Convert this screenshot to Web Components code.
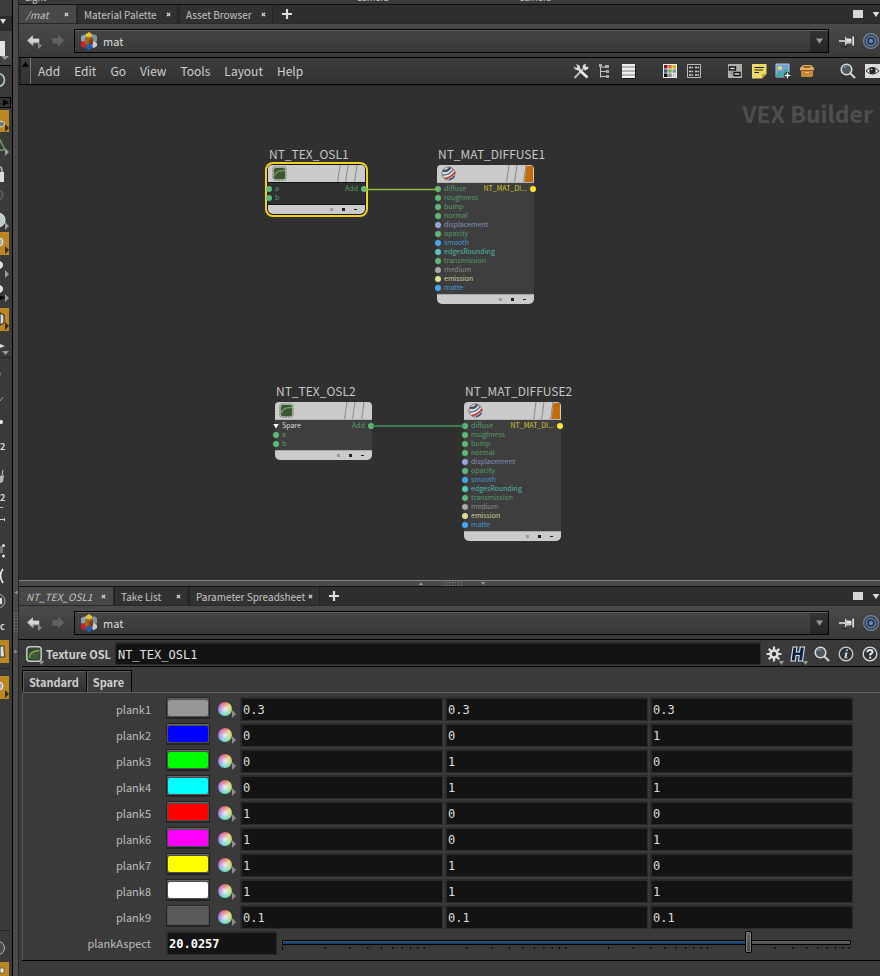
<!DOCTYPE html>
<html lang="en">
<head>
<meta charset="utf-8">
<title>Network editor</title>
<style>
html, body { height: 100%; }
body { margin: 0; background: #3a3a3a; color: #cccccc; overflow: hidden;
  font: 12px/16px "Noto Sans CJK SC", "Noto Sans", sans-serif; }
</style>
</head>
<body>
<app-window></app-window>
<script>
const ICONS = {
  back: ['0 0 20 20', '<path d="M1 9.500 9 2V6.500H17V13H9V17Z" fill="#d4d4d4" stroke="#222" stroke-width=".6"/><path d="M3 10 9 15.500V12H16" fill="none" stroke="#999"/><path d="M15 12 20 16 15 20Z" fill="#8a8a8a"/>'],
  forward: ['0 0 20 20', '<path d="M18 9.500 10 2V6.500H3V13H10V17Z" fill="#626262"/><path d="M16 13 19 16 16 19Z" fill="#444"/>'],
  mat: ['0 0 18 18', '<path d="M1 4 6 2 8 4V9L4 11 1 9Z" fill="#8fa3b0"/><path d="M10 4 14 2 17 4V9L13 11 10 9Z" fill="#7d93a5"/><path d="M1 10 4 9 7 11V15L4 16 1 14Z" fill="#cc2222"/><path d="M11 11 14 9 17 11V14L14 16 11 15Z" fill="#c9c9c9"/><path d="M5 6 9 4 13 6V12L9 14 5 12Z" fill="#a8641a"/><path d="M9 8V14L13 12V6Z" fill="#7c430f"/><path d="M6 2 9 0 12 2 12 4 9 5.500 6 4Z" fill="#e6c52c"/><path d="M5.500 13 9 11.500 12.500 13V16L9 18 5.500 16Z" fill="#285ba8"/>'],
  pin: ['0 0 16 16', '<path d="M0 7.200H6V8.800H0Z" fill="#ddd"/><path d="M6 3 8 5.500H12V10.500H8L6 13Z" fill="#c9c9c9"/><path d="M8 7H12" stroke="#fff"/><path d="M12.500 6V10" stroke="#888"/><path d="M14.200 3.500V12.500" stroke="#e6e6e6" stroke-width="1.600"/><path d="M2 13.500H8" stroke="#252525"/>'],
  target: ['0 0 16 16', '<circle cx="8" cy="8" r="7.400" fill="#333c49" stroke="#7289aa" stroke-width="1.200"/><circle cx="8" cy="8" r="4.700" fill="none" stroke="#6888b8" stroke-width="1.200"/><circle cx="8" cy="8" r="2" fill="#5f8fd6"/>'],
  max: ['0 0 10 8', '<path d="M0 0H10V8H0Z" fill="#d5d7d5"/>'],
  tri: ['0 0 8 6', '<path d="M0 0H8L4 6Z" fill="currentColor"/>'],
  triUp: ['0 0 8 6', '<path d="M0 6H8L4 0Z" fill="currentColor"/>'],
  plus: ['0 0 10 10', '<path d="M5 0V10M0 5H10" stroke="#ddd" stroke-width="2.200"/>'],
  close: ['0 0 6 6', '<path d="M1 1 5 5M5 1 1 5" stroke="#ddd" stroke-width="1.500"/>'],
  tools: ['0 0 16 16', '<path d="M1.500 15 10 6" stroke="#b9b9b9" stroke-width="2"/><path d="M9.500 5 10 2 13 .5 12.500 3 13.500 4 15.500 3.500 15 6 12 7.500Z" fill="#ddd"/><path d="M.5 3 3 5 4.500 4 3 1 6.500 2.500 7.500 6 9 8 7 9.500 5.500 7.500 2 6.500Z" fill="#dcdcdc"/><path d="M8 8.500 14.500 14.500" stroke="#eee" stroke-width="2.600"/>'],
  tree: ['0 0 16 16', '<path d="M3.500 2V14.500M3.500 4H8M3.500 8.500H9M3.500 13.500H9" stroke="#c8c8c8" fill="none"/><path d="M2 1H5V4H2ZM8 2H12V5H8ZM9 7H12V10H9ZM9 12H12V15H9Z" fill="#aaa"/>'],
  list: ['0 0 16 16', '<path d="M2 2H15V16H2Z" fill="#181818"/><path d="M1 1H14V15H1Z" fill="#b5b5b5"/><path d="M1 2H14M1 6H14M1 10H14M1 14H14" stroke="#efefef" stroke-width="2"/>'],
  palette: ['0 0 16 16', '<path d="M1 1H15V15H1Z" fill="#eee"/><path d="M2 2H5.500V5.500H2Z" fill="#912"/><path d="M6.300 2H9.700V5.500H6.300Z" fill="#d86b28"/><path d="M10.500 2H14V5.500H10.500Z" fill="#d9b41f"/><path d="M2 6.300H5.500V9.700H2Z" fill="#345888"/><path d="M6.300 6.300H9.700V9.700H6.300Z" fill="#6bb72c"/><path d="M10.500 6.300H14V9.700H10.500Z" fill="#8295a9"/><path d="M2 10.500H5.500V14H2Z" fill="#111"/><path d="M6.300 10.500H9.700V14H6.300Z" fill="#888"/><path d="M10.500 10.500H14V14H10.500Z" fill="#ccc"/>'],
  table: ['0 0 16 16', '<path d="M1.500 1.500H14.500V14.500H1.500Z" fill="#333" stroke="#bbb"/><path d="M3 4.500H7M9 4.500H13M3 8.500H7M9 8.500H13M3 12H7M9 12H13" stroke="#d7d7d7" stroke-width="1.600" stroke-dasharray="2.500 .5"/>'],
  netbox: ['0 0 16 16', '<path d="M1 1H15V15H1Z" fill="#adb0ad"/><path d="M2.500 4H8.500V7H2.500ZM7 9.500H13V12.500H7Z" fill="#ddd" stroke="#111" stroke-width="1.400"/><path d="M4.500 7V11H7" stroke="#777" fill="none"/>'],
  note: ['0 0 16 16', '<path d="M1 1H15.500V11L11 15.500H1Z" fill="#ecd968"/><path d="M11 15.500V11H15.500Z" fill="#bda83d"/><path d="M3.500 4.500H13M3.500 7H12M3.500 9.500H8" stroke="#222" stroke-width="1.200"/>'],
  image: ['0 0 16 16', '<path d="M1 1H14V14H1Z" fill="#6f9fd5" stroke="#a9c9e9"/><circle cx="5" cy="5" r="2" fill="#ece454"/><path d="M1 12 5 8 7 10 11 5 14 9V14H1Z" fill="#47a9a5"/><path d="M12.500 9V16M9 12.500H16" stroke="#111" stroke-width="3.600"/><path d="M12.500 9.500V15.500M9.500 12.500H15.500" stroke="#fff" stroke-width="1.500"/>'],
  box: ['0 0 16 16', '<path d="M1 5 4 2H12L15 5V8H1Z" fill="#e2ad66"/><path d="M4 3H12L11 5H5Z" fill="#98612a"/><path d="M2 8H14V13L13 14H3L2 13Z" fill="#c98938"/><path d="M1 7.500H15" stroke="#8b5a22"/><path d="M6 9.500H10" stroke="#f2c885"/>'],
  search: ['0 0 16 16', '<path d="M10 10 15 15" stroke="#ccc" stroke-width="2.200"/><circle cx="6.500" cy="6.500" r="5.300" fill="#4b5a60" stroke="#ddd" stroke-width="1.500"/><path d="M4 5A3 3 0 0 1 7 3.500" stroke="#90a2a9" fill="none"/>'],
  eye: ['0 0 16 16', '<path d="M1 1H16V15H1Z" fill="#ddd"/><path d="M2 8Q8.500 1 15 8Q8.500 14 2 8Z" fill="#fff" stroke="#222"/><circle cx="8.500" cy="7.500" r="3.200" fill="#222"/><circle cx="7.600" cy="6.500" r="1" fill="#aaa"/>'],
  gear: ['0 0 16 16', '<path d="M8 .5V15.500M.5 8H15.500M2.700 2.700 13.300 13.300M13.300 2.700 2.700 13.300" stroke="#ddd" stroke-width="2.200"/><circle cx="8" cy="8" r="4.800" fill="#ddd"/><circle cx="8" cy="8" r="2.200" fill="#333"/>'],
  hlogo: ['0 0 16 16', '<path d="M3 1H7L6.300 6H9.500L10.200 1H14.500L12.500 15H8.500L9.200 9.500H6L5.300 15H1Z" fill="#0d2138" stroke="#dce8f4" stroke-width="1.100"/>'],
  info: ['0 0 16 16', '<circle cx="8" cy="8" r="6.800" fill="#2b3338" stroke="#ccc" stroke-width="1.300"/><path d="M8.500 3.500H10L9.700 5H8.200ZM7 6.500H9.500L8.300 11.500H9.500V12.300H6.300L7.500 7.300H6.800Z" fill="#e5e5e5"/>'],
  help: ['0 0 16 16', '<circle cx="8" cy="8" r="6.800" fill="#2b3338" stroke="#ddd" stroke-width="1.300"/><path d="M5.500 6.200Q5.500 4 8 4T10.500 6Q10.500 7.300 8.200 8.400V9.600" fill="none" stroke="#eee" stroke-width="1.900"/><path d="M7.200 10.700H9.200V12.500H7.200Z" fill="#eee"/>'],
  osl: ['0 0 16 16', '<rect x=".8" y=".8" width="14.400" height="14.400" rx="3" fill="#35452f" stroke="#c3c9c3" stroke-width="1.500"/><path d="M3 13Q3 5 13 4.500V13Z" fill="#42583a"/><path d="M3 12Q4 4.500 13.500 4.500" fill="none" stroke="#74ab58" stroke-width="1.400"/>'],
  oslNode: ['0 0 16 16', '<rect x=".8" y=".8" width="14.400" height="14.400" rx="2.500" fill="#b4b9b0" stroke="#7c8479" stroke-dasharray="2 1"/><rect x="2" y="2" width="12" height="12" rx="2" fill="#3c5733"/><path d="M2 11Q5 4 14 5" fill="none" stroke="#74945f" stroke-width="1.600"/>'],
  ball: ['0 0 16 16', '<circle cx="8" cy="8" r="7" fill="#e4e2df" stroke="#777"/><path d="M1.800 5Q7 6.500 10 1.500" fill="none" stroke="#4c5460" stroke-width="2.600"/><path d="M1.500 9.500Q9 10 13 3.500" fill="none" stroke="#5f7393" stroke-width="1.500"/><path d="M4 13.500Q11 12.500 15 6.500" fill="none" stroke="#b8433a" stroke-width="2"/><path d="M8.500 14.500Q12 14 14.200 11" fill="none" stroke="#44506a" stroke-width="1.800"/>']
};

/* Registers an element; its markup is a string, or a function that builds one from the host's attributes. */
function define(tag, css, html) {
  customElements.define(tag, class extends HTMLElement {
    connectedCallback() {
      if (this.shadowRoot) return;
      this.attachShadow({ mode: 'open' }).innerHTML =
        `<style>*{box-sizing:border-box}button{font:inherit;color:inherit;background:none;border:0;padding:0;margin:0}${css}</style>` +
        (typeof html === 'function' ? html((name) => this.getAttribute(name)) : html);
    }
  });
}

define('ui-icon', ':host{display:block;flex:none;width:16px;height:16px}svg{display:block;width:100%;height:100%;overflow:visible}',
  (get) => { const [box, art] = ICONS[get('name')]; return `<svg viewBox="${box}" aria-hidden="true">${art}</svg>`; });

define('icon-button', `:host{display:block;flex:none;position:relative}button{display:block}
  .more{position:absolute;right:-3px;bottom:-3px;width:7px;height:4px;color:#999}`,
  (get) => `<button aria-label="${get('label') || get('icon')}"><ui-icon name="${get('icon')}"></ui-icon></button>` +
    (get('menu') !== null ? '<ui-icon class="more" name="tri"></ui-icon>' : ''));

/* ---- pane tabs ---- */
define('pane-tab', `:host{display:flex;align-items:center;justify-content:space-between;padding:1px 6px 0;
    background:#323232;border-left:1px solid #222;border-right:1px solid #252525;color:#c4c4c4;white-space:nowrap}
  :host([active]){background:#484848;border-color:#484848}
  :host([active]) .name{font-style:italic} ui-icon{width:5px;height:5px} .name{line-height:18px}`,
  '<button class="name" role="tab"><slot></slot></button><button aria-label="Close tab"><ui-icon name="close"></ui-icon></button>');

define('pane-tabs', `:host{display:flex;height:20px;background:#2e2e2e;border-top:1px solid #111;border-bottom:1px solid #292929;padding-left:0;font-size:10px}
  .tabs{display:flex;gap:1px}.tabs ::slotted(*){flex:none}
  .add{display:flex;align-items:center;margin-left:9px}.add ui-icon{width:10px;height:10px}
  .end{margin-left:auto;display:flex;align-items:center;gap:9px}.max{width:10px;height:8px}.down{width:8px;height:5px;color:#e0e0e0}`,
  `<div class="tabs" role="tablist"><slot></slot></div><button class="add" aria-label="New tab"><ui-icon name="plus"></ui-icon></button>
   <div class="end"><button aria-label="Maximize"><ui-icon class="max" name="max"></ui-icon></button><button aria-label="Pane menu"><ui-icon class="down" name="tri"></ui-icon></button></div>`);

define('path-bar', `:host{display:flex;align-items:center;height:34px;background:linear-gradient(#4a4a4a,#393939);border-bottom:1px solid #000;padding:0 1px 0 7px;gap:8px}
  .nav{width:16px;height:16px}
  .path{flex:1;display:flex;align-items:center;height:24px;border:1px solid #000;background:linear-gradient(#444,#393939);box-shadow:inset 0 1px #626262;margin-right:2px;padding-left:5px;gap:5px}
  .path ui-icon{width:18px;height:18px}
  input{flex:1;min-width:0;height:20px;border:0;background:none;color:#ddd;font:inherit;font-size:11px;padding:0;outline:0}
  .path .drop{width:18px;align-self:stretch;background:linear-gradient(#333,#262626);display:flex;align-items:center;justify-content:center;margin-top:1px}
  .path .drop ui-icon{width:7px;height:6px;color:#999}`,
  `<button aria-label="Back"><ui-icon class="nav" name="back"></ui-icon></button><button aria-label="Forward"><ui-icon class="nav" name="forward"></ui-icon></button>
   <div class="path"><ui-icon name="mat"></ui-icon><input value="mat" aria-label="Path"><button class="drop" aria-label="Path history"><ui-icon name="tri"></ui-icon></button></div>
   <icon-button icon="pin"></icon-button><icon-button icon="target"></icon-button>`);

define('menu-bar', `:host{display:flex;align-items:center;height:27px;background:linear-gradient(#3d3d3d,#323232);border-bottom:1px solid #000;font-size:12px;color:#cfcfcf}
  .grip{align-self:stretch;width:12px;border-right:1px solid #777;border-left:2px solid #222;display:flex;align-items:flex-start;padding:3px 1px;color:#000}
  .grip ui-icon{width:7px;height:6px}
  nav{display:flex;gap:14px;padding-left:7px}
  .tools{margin-left:auto;display:flex;gap:25px}.tools div{display:flex;gap:8px}`,
  `<button class="grip" aria-label="Collapse menu"><ui-icon name="triUp"></ui-icon></button>
   <nav><button>Add</button><button>Edit</button><button>Go</button><button>View</button><button>Tools</button><button>Layout</button><button>Help</button></nav>
   <div class="tools">${['tools tree list', 'palette table', 'netbox note image box', 'search eye'].map((g) =>
     `<div>${g.split(' ').map((n) => `<icon-button icon="${n}"></icon-button>`).join('')}</div>`).join('')}</div>`);

/* ---- network nodes ---- */
const PORT = { green: ['#5fb878', '#559d68'], lilac: ['#93a8dc', '#8593bd'], blue: ['#48a8ee', '#4495cf'], teal: ['#5ac8c0', '#50b5aa'],
  grey: ['#a8a8a8', '#8c8c8c'], cream: ['#dfdf9c', '#cfcf9c'], white: ['#fff', '#ddd'], yellow: ['#ffe62e', '#d6c92f'] };

define('node-port', `:host{display:flex;align-items:center;height:9px;font-size:7px;line-height:9px;gap:3px;margin:0 -2px;white-space:nowrap}
  i{width:6px;height:6px;border-radius:50%;margin-top:1px;flex:none}
  i.fold{border-radius:0;height:5px;clip-path:polygon(0 0,100% 0,50% 100%)}
  .out{margin-left:auto;display:flex;align-items:center;gap:3px}`, (get) => {
    const tone = get('tone'), out = get('out');
    const outTone = out === 'Add' ? 'green' : 'yellow';
    return `<i ${tone === 'white' ? 'class="fold"' : ''} style="background:${PORT[tone][0]}"></i><span style="color:${PORT[tone][1]}"><slot></slot></span>` +
      (out ? `<span class="out" style="color:${PORT[outTone][1]}">${out}<i style="background:${PORT[outTone][0]}"></i></span>` : '');
  });

define('node-box', `:host{position:absolute;width:97px}
  h3{margin:0 0 2px 1px;font-size:12px;line-height:18px;font-weight:400;color:#c6c6c6;white-space:nowrap}
  .box{border-radius:5px;background:#3e3e3e}
  :host([selected]) .box{box-shadow:0 0 0 1px #151515,0 0 0 3px #f2d21c;background:#303030}
  header{height:18px;border-radius:4px 4px 0 0;background:#cbcbcb;display:flex;align-items:center;padding-left:4px;overflow:hidden;border-bottom:1px solid #b5b5b5}
  header ui-icon{width:15px;height:15px} header svg{margin-left:auto;height:18px;width:29px}
  :host([selected]) header,:host([selected]) footer{border-color:#111}
  .ports{padding:1px 0 2px}
  footer{height:10px;border-radius:0 0 5px 5px;background:#cbcbcb;display:flex;gap:9px;justify-content:flex-end;align-items:center;padding-right:8px;border-top:1px solid #aaa}
  footer i{width:3px;height:3px;background:#999}footer i+i{background:#222}footer i+i+i{height:1px;margin-bottom:1px}`,
  (get) => {
    const mat = get('kind') === 'mat';
    return `<h3>${get('name')}</h3><div class="box"><header><ui-icon name="${mat ? 'ball' : 'oslNode'}"></ui-icon>
      <svg viewBox="0 0 29 18"><path d="M4 0 1.500 18M12 0 9.500 18M21 0 18.500 18" stroke="#888" fill="none"/>${mat ? '<path d="M21.500 1H28V17H19.500Z" fill="#c36a09"/>' : ''}</svg></header>
      <div class="ports"><slot></slot></div><footer><i></i><i></i><i></i></footer></div>`;
  });

define('network-view', `:host{display:block;position:relative;background:#303030;overflow:hidden}
  h2{margin:12px 7px 0;text-align:right;font-size:23px;line-height:32px;font-weight:700;color:#4e4e4e}
  .wires{position:absolute;inset:0;width:100%;height:100%}
  .a1{left:249px;top:60px}.b1{left:418px;top:60px}.a2{left:256px;top:297px}.b2{left:445px;top:297px}`, () => {
    const inputs = [['roughness','green'],['bump','green'],['normal','green'],['displacement','lilac'],['opacity','green'],['smooth','blue'],['edgesRounding','teal'],['transmission','green'],['medium','grey'],['emission','cream'],['matte','blue']];
    const mat = '<node-port tone="green" out="NT_MAT_DI...">diffuse</node-port>' + inputs.map(([n, t]) => `<node-port tone="${t}">${n}</node-port>`).join('');
    return `<h2>VEX Builder</h2>
      <node-box class="a1" name="NT_TEX_OSL1" kind="osl" selected><node-port tone="green" out="Add">a</node-port><node-port tone="green">b</node-port></node-box>
      <node-box class="b1" name="NT_MAT_DIFFUSE1" kind="mat">${mat}</node-box>
      <node-box class="a2" name="NT_TEX_OSL2" kind="osl"><node-port tone="white" out="Add">Spare</node-port><node-port tone="green">a</node-port><node-port tone="green">b</node-port></node-box>
      <node-box class="b2" name="NT_MAT_DIFFUSE2" kind="mat">${mat}</node-box>
      <svg class="wires" aria-hidden="true"><path d="M345 104.500H419" stroke="#93b83a" stroke-width="1.300"/><path d="M352 341H446" stroke="#459459" stroke-width="1.300"/></svg>`;
  });

/* ---- parameters ---- */
define('param-header', `:host{display:flex;align-items:center;height:27px;border-bottom:1px solid #000;padding:1px 2px 0 4px;margin:0 0 0 3px;gap:8px}
  label{font-weight:700;font-size:11px;color:#cfcfcf;white-space:nowrap;margin:0 -4px}
  input{flex:1;min-width:0;height:23px;border:1px solid #2c2c2c;border-top:2px solid #292929;background:#131313;color:#e0e0e0;font:12px/16px "DejaVu Sans Mono",monospace;padding:1px 2px 0;outline:0;margin-right:-3px}`,
  `<icon-button icon="osl" label="Texture OSL" menu></icon-button><label for="n">Texture OSL</label><input id="n" value="NT_TEX_OSL1">
   <icon-button icon="gear" menu></icon-button><icon-button icon="hlogo" menu></icon-button><icon-button icon="search"></icon-button><icon-button icon="info"></icon-button><icon-button icon="help"></icon-button>`);

const FIELD = `input.f{width:100%;min-width:0;height:24px;border:2px solid #2b2b2b;border-right-width:1px;border-bottom-width:1px;background:#131313;color:#dedede;
  font:12px/16px "DejaVu Sans Mono",monospace;padding:1px 1px 0;outline:0;margin:0}`;
const ROW = ':host{display:grid;grid-template-columns:128px minmax(0,1fr);column-gap:15px;align-items:center;height:26px;padding-right:27px}.l{text-align:right;font-size:11px;color:#bdbdbd;white-space:nowrap}';

define('color-row', `${ROW}${FIELD}
  .c{display:grid;grid-template-columns:44px 26px repeat(3,minmax(0,1fr));column-gap:2px;align-items:center}
  .sw{height:22px;border:1px solid #232323;border-bottom-width:2px;background:#505050;box-shadow:inset 0 1px #686868;padding:2px 1px 1px;margin-bottom:2px}
  .sw i{display:block;height:100%;border-radius:2px}
  .wheel{position:relative;width:14px;height:14px;border-radius:50%;margin-left:6px;
    background:radial-gradient(circle,#eee 0%,#eee0 80%),conic-gradient(#d9504a,#dfc95a,#a5d65a,#57dfa0,#55c6e0,#8a6ae8,#c04aaf,#d9504a)}
  .wheel::after{content:"";position:absolute;left:14px;top:8px;border:4px solid transparent;border-left-color:#8d8d8d;border-right:0}`,
  (get) => `<span class="l">${get('name')}</span><div class="c"><button class="sw" aria-label="${get('name')} color"><i style="background:${get('color')}"></i></button>
    <button class="wheel" aria-label="Color picker"></button>${get('values').split(' ').map((v, i) =>
      `<input class="f" value="${v}" aria-label="${get('name')} ${'RGB'[i]}">`).join('')}</div>`);

define('slider-row', `${ROW}${FIELD} :host{padding-right:29px} input.f{font-weight:700;color:#fff}
  .c{display:grid;grid-template-columns:111px minmax(0,1fr);column-gap:5px;align-items:center}
  .s{position:relative;height:24px}
  input[type=range]{appearance:none;display:block;width:100%;height:22px;margin:0;background:none;position:relative}
  input[type=range]::-webkit-slider-runnable-track{height:5px;border:1px solid #000;border-radius:1px;background:linear-gradient(90deg,#173f70 82%,#555 82%);box-shadow:inset 0 1px #7777}
  input[type=range]::-webkit-slider-thumb{appearance:none;width:7px;height:22px;margin-top:-10px;border:1px solid #000;border-radius:2px;background:linear-gradient(#666,#444);box-shadow:inset 0 0 0 1px #7d7d7d}
  svg{position:absolute;left:0;bottom:5px;width:100%;height:3px}`,
  () => {
    let ticks = '<rect x="0" width="1" height="3"/>';
    for (let d = 0; d < 4; d++) for (let n = 2; n < 11; n++) ticks += `<rect x="${(d + Math.log10(n)) * 24.9}%" width="1" height="2"/>`;
    return `<label class="l" for="v">plankAspect</label><div class="c"><input class="f" id="v" value="20.0257"><div class="s"><svg aria-hidden="true">${ticks}</svg><input type="range" min="0" max="4" step="0.0001" value="3.3016" aria-label="plankAspect slider"></div></div>`;
  });

define('folder-tabs', `:host{display:block;margin:3px 0 0 3px;border-bottom:1px solid #000}
  .tabs{display:flex}
  .tabs button{height:22px;padding:0 7px 0 6px;border:1px solid #000;border-bottom:0;background:linear-gradient(#454545,#2f2f2f);box-shadow:inset 1px 1px #5c5c5c;font-weight:700;font-size:11px;line-height:22px;color:#cfcfcf}
  .tabs button[aria-selected=true]{background:#3d3d3d;margin-left:-1px}
  .body{border-top:1px solid #616161;border-left:1px solid #555;padding:3px 0 4px}`,
  '<div class="tabs" role="tablist"><button role="tab">Standard</button><button role="tab" aria-selected="true">Spare</button></div><div class="body"><slot></slot></div>');

/* ---- left shelf ---- */
const corner = (y, c = '#999') => `<path d="M5 ${y}V${y + 8}L9 ${y + 4}Z" fill="${c}"/>`;
const gold = '#bb8722';
const SHELF = [
  [16, '#3c3c3c', ''],
  [15, '#2c2c2c', '<path d="M0 3H6L3 8Z" fill="#ddd"/>'],
  [34, '#444', '<path d="M0 10H5V25H0Z" fill="#e2e2e2"/><path d="M1 25H9L5 29Z" fill="#999"/>'],
  [32, '#3a3a3a', '<path d="M0 .5H11" stroke="#000"/><circle cx="-2" cy="15" r="6.500" fill="#344" stroke="#ccc" stroke-width="1.500"/>'],
  [11, '#333', '<path d="M3 2V9L9 5.500Z" fill="#000"/><path d="M0 .5H10.500V10.500H0" fill="none" stroke="#000"/>'],
  [26, '', `<path d="M0 2H9V24H0Z" fill="${gold}"/><path d="M0 13Q4 13 5 16Q2 20 0 19" fill="#777" stroke="#ddd"/>${corner(16, '#3b2c0e')}`],
  [26, '', `<path d="M-3 16 0 6 5 16Z" fill="none" stroke="#6c9c5c" stroke-width="1.500"/>${corner(14)}`],
  [25, '', '<path d="M0 12H4V22H0Z" fill="#ddd"/><path d="M0 7Q2 7 2 12" fill="none" stroke="#aaa" stroke-width="2"/>'],
  [22, '', '<circle cx="-2" cy="10" r="5" fill="#354545" stroke="#777"/>'],
  [24, '', `<circle cx="-2" cy="13" r="7" fill="#bfc9c7" stroke="#eee"/>${corner(15)}`],
  [25, '', `<path d="M0 1H9V24H0Z" fill="${gold}"/><circle cx="-1" cy="11" r="4" fill="#aaa" stroke="#eee"/>${corner(15, '#3b2c0e')}`],
  [24, '', `<circle cx="-1" cy="9" r="3.500" fill="#ddd" stroke="#eec"/>${corner(14)}`],
  [25, '', `<circle cx="-1" cy="9" r="3.500" fill="#ddd" stroke="#eec"/><path d="M0 16 6 17 0 20Z" fill="#000"/>${corner(14)}`],
  [27, '', `<path d="M0 3H9V26H0Z" fill="${gold}"/><path d="M0 8 4 10V18L0 20Z" fill="#ddd" stroke="#111"/>${corner(17, '#3b2c0e')}`],
  [26, '', '<path d="M0 12 5 14 0 16Z" fill="#ddd"/><path d="M2 19H9L5.500 23Z" fill="#999"/><path d="M0 25.500H11" stroke="#252525"/>'],
  [29, '', '<circle cx="-1" cy="16" r="2" fill="#777"/>'],
  [24, '', '<path d="M0 14 3 10" stroke="#aaa"/>'],
  [24, '', '<circle cx="1" cy="11" r="2" fill="#eee"/>'],
  [24, '2', ''],
  [30, '', '<path d="M3 11 2 16" stroke="#ccc"/><path d="M0 17 4 16 3 23 0 24Z" fill="#b5b5b5"/>'],
  [18, '2', ''],
  [24, '', '<path d="M0 -3H4L3 1H0Z" fill="#b5b5b5"/><path d="M0 12.500H5M4.500 11V14" stroke="#ccc"/>'],
  [28, '', '<path d="M0 15H3V22H0Z" fill="#777"/><circle cx="3.500" cy="14.500" r="1.500" fill="#ddd"/><circle cx="3.500" cy="25" r="1.500" fill="#ddd"/>'],
  [27, '', '<path d="M3 10Q-2 16 3 24M-1 15 2 22" fill="none" stroke="#eee" stroke-width="1.500"/>'],
  [27, '', '<circle cx="-2" cy="15" r="7" fill="#444" stroke="#aaa"/><path d="M0 12H2V18H0Z" fill="#ddd"/>'],
  [27, 'c', ''],
  [28, '', `<path d="M0 0H9V23H0Z" fill="${gold}"/><path d="M0 6H4V11L5 17H0Z" fill="#ddd" stroke="#333"/>`],
  [35, '', `<path d="M0 .5H10" stroke="#282828"/><path d="M0 8H9V31H0Z" fill="${gold}"/><circle cx="-1" cy="18" r="4" fill="#aaa" stroke="#eee"/>${corner(22, '#3b2c0e')}`],
  [227, '', ''],
  [32, '', '<path d="M0 .5H10" stroke="#252525"/><circle cx="-2" cy="18" r="6.500" fill="#454b4d" stroke="#bbb"/>'],
  [14, '', `<path d="M0 0H9V14H0Z" fill="${gold}"/><path d="M0 6H4V11H0Z" fill="#eed" stroke="#765"/>`]
];
define('tool-shelf', `:host{display:flex;flex-direction:column;width:13px;background:#3a3a3a;border-right:1px solid #000;overflow:hidden}
  button{display:block;flex:none;width:100%;text-align:left;font-size:9px;line-height:12px;font-weight:700;color:#ddd}svg{display:block}`,
  () => SHELF.map(([h, bg, art], i) => {
    const text = bg && bg[0] !== '#';
    return `<button aria-label="Tool ${i + 1}" style="height:${h}px;${bg && !text ? 'background:' + bg : ''}">${text ? bg : `<svg width="12" height="${h}">${art}</svg>`}</button>`;
  }).join(''));

define('pane-splitter', `:host{display:flex;align-items:center;justify-content:center;background:#4a4a4a;color:#999}
  .dots{background:radial-gradient(circle,#888 35%,#0000 45%) 0 0/3px 3px}
  ui-icon{width:6px;height:3px}
  :host([vertical]){flex-direction:column;width:6px;border-right:1px solid #262626;gap:18px;padding-top:268px}
  :host([vertical]) .dots{width:5px;height:20px} :host([vertical]) ui-icon{transform:rotate(-90deg)}
  :host(:not([vertical])){height:6px;border-top:1px solid #858585;gap:18px;padding-left:5px}
  :host(:not([vertical])) .dots{width:20px;height:5px}`,
  '<ui-icon name="triUp"></ui-icon><span class="dots"></span><ui-icon name="tri"></ui-icon>');

define('app-window', `:host{display:flex;height:100vh}
  .main{flex:1;min-width:0;display:flex;flex-direction:column}
  .top{height:4px;flex:none;overflow:hidden;display:flex;align-items:flex-end;font-size:9px;line-height:9px;color:#ccc}
  .top span{height:11px}.top span:nth-child(1){margin-left:6px}.top span:nth-child(2){margin-left:310px}.top span:nth-child(3){margin-left:130px}
  network-view{flex:1;min-height:200px}
  pane-splitter,path-bar,pane-tabs,menu-bar{flex:none}
  .foot{height:15px}
  .path-tab{width:57px}.palette-tab{width:101px}.wide-tab{width:94px}.take-tab{width:74px}.sheet-tab{width:131px}`, () => {
    const rows = [['#969696','0.3 0.3 0.3'],['#0000ff','0 0 1'],['#00ff00','0 1 0'],['#00ffff','0 1 1'],['#ff0000','1 0 0'],['#ff00ff','1 0 1'],['#ffff00','1 1 0'],['#ffffff','1 1 1'],['#5a5a5a','0.1 0.1 0.1']];
    return `<tool-shelf></tool-shelf><pane-splitter vertical></pane-splitter><div class="main">
      <div class="top"><span>Light</span><span>Camera</span><span>Camera</span></div>
      <pane-tabs><pane-tab class="path-tab" active>/mat</pane-tab><pane-tab class="palette-tab">Material Palette</pane-tab><pane-tab class="wide-tab">Asset Browser</pane-tab></pane-tabs>
      <path-bar></path-bar><menu-bar></menu-bar><network-view></network-view><pane-splitter></pane-splitter>
      <pane-tabs><pane-tab class="wide-tab" active>NT_TEX_OSL1</pane-tab><pane-tab class="take-tab">Take List</pane-tab><pane-tab class="sheet-tab">Parameter Spreadsheet</pane-tab></pane-tabs>
      <path-bar></path-bar><param-header></param-header>
      <folder-tabs>${rows.map(([c, v], i) => `<color-row name="plank${i + 1}" color="${c}" values="${v}"></color-row>`).join('')}<slider-row></slider-row></folder-tabs>
      <div class="foot"></div></div>`;
  });
</script>
</body>
</html>
